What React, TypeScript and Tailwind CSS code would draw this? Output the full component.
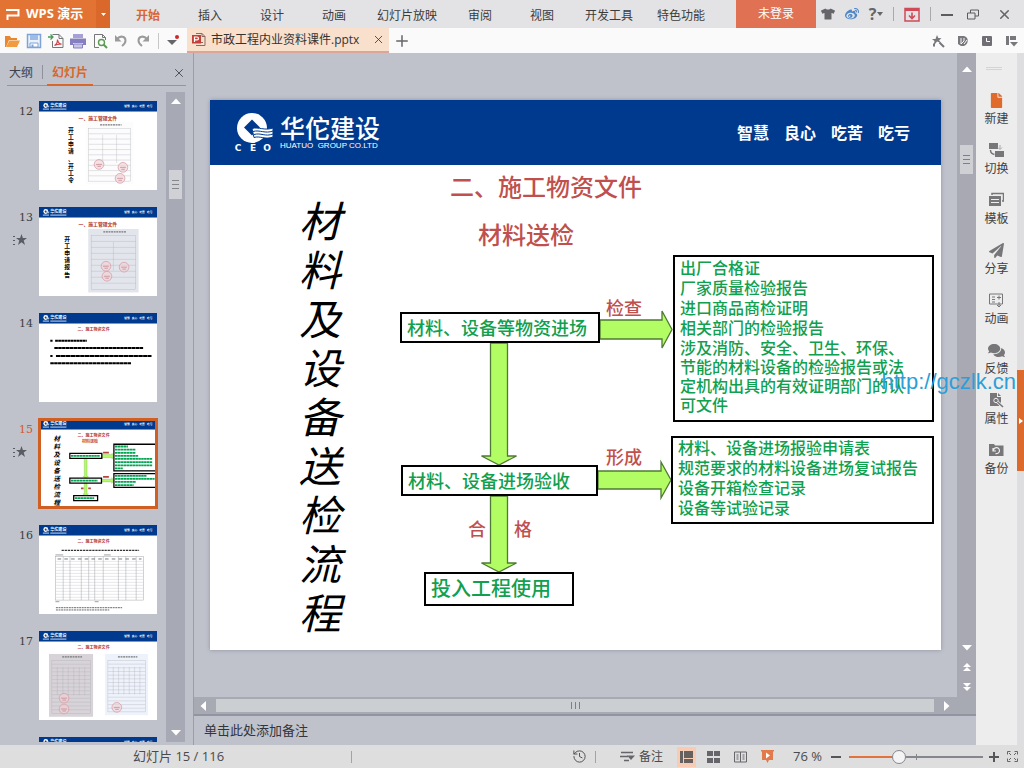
import type { ReactNode } from "react";
import { FaComments, FaFile, FaPaperPlane, FaTshirt, FaWeibo } from "react-icons/fa";
import { History, Plus, X } from "lucide-react";

const MENU = ["开始", "插入", "设计", "动画", "幻灯片放映", "审阅", "视图", "开发工具", "特色功能"];
const MOTTO = ["智慧", "良心", "吃苦", "吃亏"];
const FLOW_TITLE = "材料及设备送检流程";

/* ---------- icons ---------- */

function Svg({ w = 16, h = 16, children }: { w?: number; h?: number; children: ReactNode }) {
  return (
    <svg width={w} height={h} viewBox={`0 0 ${w} ${h}`} fill="none" aria-hidden="true" className="shrink-0">
      {children}
    </svg>
  );
}

const FolderIcon = () => (
  <Svg>
    <path d="M1 14V3h5l1 2h6v2H5L2 14z" fill="#e8872f" />
    <path d="M2 14l3.500-6.500H16L13 14z" fill="#f29a3f" />
  </Svg>
);
const SaveIcon = () => (
  <Svg>
    <path d="M1.500 1.500h13v13h-13z" stroke="#7fa3d6" strokeWidth="1.500" fill="#e9f1fb" />
    <path d="M4 2h8v5H4z" fill="#9dbce6" />
    <path d="M4 10h8v4H4z" stroke="#7fa3d6" fill="#fff" />
    <path d="M5.500 11.500h2V14h-2z" fill="#7fa3d6" />
  </Svg>
);
const PdfIcon = () => (
  <Svg>
    <path d="M4.500 1.500H11L15 5.500v9H4.500V8" stroke="#777" />
    <path d="M11 1.500v4h4" stroke="#777" />
    <path d="M0 4h5M2.500 1.500L5 4 2.500 6.500" stroke="#4a9a5b" strokeWidth="1.300" />
    <path d="M6.500 12.500c2-1 3-3.500 3-6 .5 3 2 4.500 4 4.700-2-.4-4.500 0-7 1.300z" stroke="#d0454c" strokeWidth="1.200" />
  </Svg>
);
const PrintIcon = () => (
  <Svg>
    <path d="M3 1h10v4H3z" fill="#a7a0d6" />
    <path d="M0 5.500h16V12h-3v-2H3v2H0z" fill="#8780c0" />
    <path d="M3.500 11h9v4h-9z" fill="#c7c4e6" stroke="#8780c0" />
  </Svg>
);
const PreviewIcon = () => (
  <Svg>
    <path d="M13.500 7V4.500l-3-3h-8v13H7" stroke="#777" />
    <path d="M10.500 1.500v3h3" stroke="#777" />
    <circle cx="9.500" cy="9.500" r="3" stroke="#5a9a52" strokeWidth="1.400" />
    <path d="M11.500 11.500L15 15" stroke="#5a9a52" strokeWidth="2" />
  </Svg>
);
const UndoIcon = ({ flip = false }: { flip?: boolean }) => (
  <Svg w={14} h={16}>
    <g transform={flip ? "translate(14 0) scale(-1 1)" : undefined}>
      <path d="M3 6c3.500-4 8.500-2.500 8.500 1.500 0 2.500-1.500 4-3.500 5.500" stroke="#9b9b9b" strokeWidth="2" />
      <path d="M1 2v6.500h6.500z" fill="#9b9b9b" />
    </g>
  </Svg>
);
const PptIcon = () => (
  <Svg w={15} h={15}>
    <path d="M5 1.500h6l3 3v9H5" stroke="#8b6a62" />
    <path d="M11 1.500v3h3M7 10.500h5" stroke="#8b6a62" />
    <path d="M1 3h9v8.500H1z" fill="#c2403a" />
    <path d="M3.500 10V5h2.600c1.800 0 1.800 2.800 0 2.800H3.500" stroke="#fff" strokeWidth="1.200" />
  </Svg>
);
const Triangle = ({ d, w = 10, h = 6 }: { d: string; w?: number; h?: number }) => (
  <Svg w={w} h={h}>
    <path d={d} fill="#fff" />
  </Svg>
);
const UP = "M0 6L5 0.500L10 6z";
const DOWN = "M0 0L5 5.500L10 0z";

const ToolStar = () => (
  <Svg w={14} h={14}>
    <path d="M6 1l1.300 3 3.200.2-2.400 2L10 9 6 7.500 2.500 12l1-5L1 5h3.500z" fill="#77777c" />
    <path d="M8.500 8.500L13 13M3 9.500v3" stroke="#77777c" strokeWidth="2" />
  </Svg>
);
const ToolShield = () => (
  <Svg w={12} h={14}>
    <path d="M1 2h6c5 1 5 8 0 10H4L1 10z" fill="#77777c" />
    <path d="M4 4v6l3-3V4M7 10l3-4" stroke="#fafafa" />
  </Svg>
);
const ToolClock = () => (
  <Svg w={12} h={12}>
    <rect x="1" y="1" width="10" height="10" rx="1" fill="#6f6f75" />
    <path d="M5.500 3v3.500H9" stroke="#fff" />
  </Svg>
);
const ToolLayout = () => (
  <Svg w={13} h={12}>
    <path d="M1 1h3v9H1zM5 1h6v4H5z" fill="#77777c" />
    <path d="M5 7h8l-4 4.500z" fill="#77777c" />
  </Svg>
);

const SwitchIcon = () => (
  <Svg>
    <path d="M1 1h9v6H1zM7 9h9v6H7z" fill="#77777a" />
    <path d="M2.500 8c0 3 1 4 4 4.500" stroke="#77777a" strokeWidth="1.500" />
    <path d="M12 3v4M10 5.500l2 2 2-2" stroke="#a9a9ac" />
  </Svg>
);
const TemplateIcon = () => (
  <Svg>
    <path d="M4 3V1.500h11.500V9H14" stroke="#77777a" strokeWidth="1.500" />
    <path d="M1 4h12v10H1z" fill="#77777a" />
    <path d="M3 7.500h8M3 10.500h8" stroke="#eee" />
  </Svg>
);
const AnimIcon = () => (
  <Svg>
    <path d="M1.500 2h13v10h-13z" stroke="#77777a" />
    <path d="M4 5h3M4 7.500h3M4 10h3" stroke="#77777a" />
    <path d="M11 3.500v4M9 5.500h4M11 10v5M9 13l2 2 2-2" stroke="#77777a" />
  </Svg>
);
const PropsIcon = () => (
  <Svg>
    <path d="M2 1h7v4h4v5l-2 4H2z" fill="#77777a" />
    <path d="M10 1l3 3h-3z" fill="#77777a" />
    <circle cx="8" cy="8.500" r="2.200" stroke="#eee" />
    <path d="M9.500 10l5.500 5" stroke="#eee" strokeWidth="3" />
    <path d="M9.500 10l5.500 5" stroke="#77777a" strokeWidth="1.600" />
  </Svg>
);
const BackupIcon = () => (
  <Svg>
    <path d="M1 2h5l1 1.500h8.500V14H1z" fill="#77777a" />
    <path d="M5.500 8.500a3 3 0 1 1 2 3M5 6v3h3" stroke="#eee" strokeWidth="1.200" />
  </Svg>
);

const SIDE: { label: string; icon: ReactNode }[] = [
  { label: "新建", icon: <FaFile size={15} color="#e06a2b" /> },
  { label: "切换", icon: <SwitchIcon /> },
  { label: "模板", icon: <TemplateIcon /> },
  { label: "分享", icon: <FaPaperPlane size={15} color="#77777a" /> },
  { label: "动画", icon: <AnimIcon /> },
  { label: "反馈", icon: <FaComments size={17} color="#77777a" /> },
  { label: "属性", icon: <PropsIcon /> },
  { label: "备份", icon: <BackupIcon /> },
];

/* ---------- slide drawing parts ---------- */

function CoinMark() {
  return (
    <g>
      <circle cx="42" cy="28" r="15" fill="#fff" />
      <path d="M42 19.500l8 8-8 8-8-8z" fill="#003a8e" />
      <path d="M42 28.500c7-2 12 2.500 21-.5v9c-8 3-13-1.500-19 .5z" fill="#fff" stroke="#003a8e" />
      <path d="M43 31.500c7-2 12 2.500 20-.5M44 34.500c7-2 11 2.500 19-.5" stroke="#003a8e" fill="none" />
    </g>
  );
}

function FlowArrows() {
  return (
    <g fill="#b1fd63" stroke="#4f7a35" strokeWidth="1.300">
      <path d="M390 220h62v-9l10 18.500-10 18.500v-9h-62z" />
      <path d="M388 371h63v-9l10 18-10 18v-9h-63z" />
      <path d="M280.500 243v113h-9l17.500 9 17.500-9h-9V243z" />
      <path d="M280.500 396v67h-9l17.500 9 17.500-9h-9v-67z" />
    </g>
  );
}

/* ---------- thumbnails (drawn on the slide's own 731 x 550 grid) ---------- */

function VerticalText({ text, x, y, step, size, italic = false }: { text: string; x: number; y: number; step: number; size: number; italic?: boolean }) {
  return (
    <g fontSize={size} fontWeight={700} fontStyle={italic ? "italic" : "normal"} textAnchor="middle" fill="#000">
      {text.split("").map((c, i) => (
        <text key={i} x={x} y={y + i * step}>{c}</text>
      ))}
    </g>
  );
}

function Sheet({ x, y, w, h, fill, rows, cols, stamps }: { x: number; y: number; w: number; h: number; fill: string; rows: number; cols: number; stamps: number[][] }) {
  return (
    <g>
      <rect x={x} y={y} width={w} height={h} fill={fill} />
      <g stroke="#a9abb2" strokeWidth="2" fill="none">
        <rect x={x + 18} y={y + 40} width={w - 36} height={h - 60} />
        {Array.from({ length: rows }, (_, i) => (
          <path key={i} d={`M${x + 18} ${y + 40 + ((i + 1) * (h - 60)) / (rows + 1)}h${w - 36}`} />
        ))}
        {Array.from({ length: cols }, (_, i) => (
          <path key={i} d={`M${x + 18 + ((i + 1) * (w - 36)) / (cols + 1)} ${y + 80}v${h * 0.45}`} />
        ))}
      </g>
      <path d={`M${x + w * 0.3} ${y + 18}h${w * 0.45}`} stroke="#777" strokeWidth="8" strokeDasharray="12 4" />
      {stamps.map(([cx, cy], i) => (
        <g key={i} stroke="#d9a0a8" strokeWidth="5" fill="#f0d0d6" fillOpacity="0.6">
          <circle cx={cx} cy={cy} r="30" />
          <path d={`M${cx - 18} ${cy}h36M${cx - 10} ${cy + 12}h22`} stroke="#c98b95" />
        </g>
      ))}
    </g>
  );
}

function ThumbBody({ n }: { n: number }) {
  if (n === 12)
    return (
      <g>
        <VerticalText text="开工申请、开工令" x={198} y={192} step={44} size={36} />
        <Sheet x={290} y={130} w={295} h={385} fill="#fcfcfd" rows={9} cols={2} stamps={[[372, 392], [520, 410], [502, 478]]} />
      </g>
    );
  if (n === 13)
    return (
      <g>
        <VerticalText text="开工申请报告" x={175} y={210} step={44} size={36} />
        <Sheet x={305} y={136} w={312} h={392} fill="#e3e5ec" rows={8} cols={1} stamps={[[415, 366], [527, 372], [421, 428]]} />
      </g>
    );
  if (n === 14)
    return (
      <g stroke="#000" strokeWidth="12">
        <path d="M70 172h14M100 172h196" strokeDasharray="17 2" />
        <path d="M95 216h550" strokeDasharray="22 2" />
        <path d="M70 266h14M105 266h592" strokeDasharray="28 2" />
        <path d="M70 310h500" strokeDasharray="22 2" />
      </g>
    );
  if (n === 15)
    return (
      <g>
        <text x="316" y="150" fontSize="25" fontWeight="700" fill="#b5443f" textAnchor="middle">材料送检</text>
        <VerticalText text={FLOW_TITLE} x={110} y={138} step={49} size={40} italic />
        <FlowArrows />
        <g fill="none" stroke="#000" strokeWidth="8">
          <path d="M191 213h198v30H191zM191 366h196v30H191zM215 473h148v32H215zM464 156h260v165H464zM464 338h260v85H464z" />
        </g>
        <g stroke="#00a550" strokeWidth="11" strokeDasharray="16 2">
          <path d="M198 228h180M198 381h165M222 489h120M471 170h80M471 189h128M471 209h128M471 228h145M471 247h230M471 267h230M471 286h230M471 305h48M471 351h195M471 370h245M471 389h130M471 408h115" />
        </g>
        <path d="M397 208h36M397 357h36M260 429h16M305 429h16" stroke="#b5443f" strokeWidth="11" />
      </g>
    );
  if (n === 16)
    return (
      <g>
        <path d="M140 157h480" stroke="#333" strokeWidth="8" strokeDasharray="14 5" />
        <path d="M102 185h48M402 185h42M102 474h24M345 474h24" stroke="#888" strokeWidth="5" />
        <g stroke="#a0a2a8" strokeWidth="3" fill="none">
          <rect x="102" y="194" width="546" height="270" />
          {Array.from({ length: 13 }, (_, i) => (
            <path key={i} d={`M102 ${225 + i * 18.500}h546`} stroke="#cfd0d5" />
          ))}
          {[150, 192, 262, 308, 345, 398, 492, 538, 602].map((x) => (
            <path key={x} d={`M${x} 194v270`} />
          ))}
        </g>
        <path d="M115 210h520" stroke="#777" strokeWidth="6" strokeDasharray="22 20" />
        <path d="M105 511h410M105 525h330" stroke="#444" strokeWidth="5" strokeDasharray="12 4" />
      </g>
    );
  if (n === 17)
    return (
      <g>
        <Sheet x={62} y={142} w={273} h={388} fill="#d7d3d8" rows={13} cols={6} stamps={[[155, 415], [155, 482]]} />
        <Sheet x={409} y={142} w={267} h={378} fill="#eef2fb" rows={13} cols={6} stamps={[[482, 472]]} />
      </g>
    );
  return null;
}

function Thumb({ n }: { n: number }) {
  const early = n < 14;
  return (
    <svg viewBox="0 0 731 550" className="block h-[89px] w-[118px] bg-white" preserveAspectRatio="none" aria-hidden="true">
      <rect width="731" height="65" fill="#003a8e" />
      <CoinMark />
      <text x="70" y="38" fontSize="25" fontWeight="700" fill="#fff">华佗建设</text>
      <path d="M24 50h38M70 50h100" stroke="#fff" strokeWidth="5" />
      {MOTTO.map((m, i) => (
        <text key={m} x={528 + i * 47} y="40" fontSize="17" fontWeight="700" fill="#fff">{m}</text>
      ))}
      {n < 18 && (
        <text x={early ? 365 : 338} y={early ? 118 : 113} fontSize={early ? 30 : 25} fontWeight="700" fill="#b5352f" textAnchor="middle">
          {early ? "一、施工管理文件" : "二、施工物资文件"}
        </text>
      )}
      <ThumbBody n={n} />
    </svg>
  );
}

/* ---------- application regions ---------- */

function TitleBar() {
  return (
    <header className="flex h-7 shrink-0 items-stretch bg-[#e3e3e5] text-xs text-[#3c3c3c]">
      <button className="flex w-[110px] shrink-0 items-center bg-[#e37332] pl-[5px] text-[13px] font-bold text-white">
        <Svg w={16} h={14}>
          <path d="M1 3h12.500v5.500H2.500V13" stroke="#fff" strokeWidth="2" />
        </Svg>
        <span className="ml-[5px] flex-1 whitespace-nowrap text-left">WPS 演示</span>
        <span className="flex h-full w-[14px] items-center justify-center bg-[#d9682a]">
          <Svg w={5} h={3}><path d="M0 0h5L2.500 3z" fill="#fff" /></Svg>
        </span>
      </button>
      <nav className="ml-[7px] flex shrink-0 pt-1">
        {MENU.map((m, i) => (
          <button key={m} className={i === 0 ? "min-w-[62px] px-3 font-bold text-[#d9662b]" : "min-w-[62px] px-3"}>{m}</button>
        ))}
      </nav>
      <div className="flex-1" />
      <button className="w-20 bg-[#e07152] text-white">未登录</button>
      <div className="flex w-52 shrink-0 items-center justify-between pl-[5px] pr-3 text-[#66666a]">
        <button aria-label="皮肤"><FaTshirt size={14} /></button>
        <button aria-label="微博"><FaWeibo size={14} color="#4f86c6" /></button>
        <button aria-label="帮助" className="flex items-center gap-px text-base font-bold leading-none">
          ?<Svg w={6} h={4}><path d="M0 0h6L3 4z" fill="#66666a" /></Svg>
        </button>
        <span className="h-3.5 w-px bg-[#a9a9ac]" />
        <button aria-label="下载">
          <Svg w={16} h={15}>
            <path d="M1 1.500h14v12.500H1z" stroke="#cf4b57" strokeWidth="1.500" />
            <path d="M1 1h14v3H1z" fill="#cf4b57" />
            <path d="M8 5.500v6M5 8.500l3 3 3-3" stroke="#cf4b57" strokeWidth="1.600" />
          </Svg>
        </button>
        <span className="h-3.5 w-px bg-[#a9a9ac]" />
        <button aria-label="最小化"><Svg w={12} h={12}><path d="M0 7h12" stroke="#5c5c60" strokeWidth="2" /></Svg></button>
        <button aria-label="还原" className="ml-1">
          <Svg w={12} h={11}>
            <path d="M0.500 4h7.500v6H0.500zM3.500 4V1h8v6H8" stroke="#5c5c60" />
          </Svg>
        </button>
        <button aria-label="关闭" className="ml-2"><X size={15} strokeWidth={2.5} /></button>
      </div>
    </header>
  );
}

function ToolBar() {
  const quick: [string, ReactNode][] = [
    ["打开", <FolderIcon />],
    ["保存", <SaveIcon />],
    ["输出PDF", <PdfIcon />],
    ["打印", <PrintIcon />],
    ["打印预览", <PreviewIcon />],
    ["撤销", <UndoIcon />],
    ["恢复", <UndoIcon flip />],
  ];
  return (
    <div className="flex h-[25px] shrink-0 items-stretch bg-[#fafafa] text-xs text-[#333]">
      <div className="flex w-[187px] shrink-0 items-center pl-1">
        {quick.map(([label, icon]) => (
          <button key={label} aria-label={label} className="flex w-[22px] shrink-0">{icon}</button>
        ))}
        <span className="h-4 w-px bg-[#c8c8ca]" />
        <button aria-label="更多" className="ml-2">
          <Svg w={12} h={14}>
            <path d="M0 6h10l-5 5z" fill="#66666a" />
            <circle cx="10" cy="3" r="2" fill="#c92a2a" />
          </Svg>
        </button>
      </div>
      <div className="flex w-[202px] shrink-0 items-center border-b-2 border-[#dba59c] bg-[#f8e0cd] pl-1">
        <PptIcon />
        <span className="ml-[5px] flex-1 whitespace-nowrap">市政工程内业资料课件.pptx</span>
        <button aria-label="关闭标签" className="mr-1"><X size={13} strokeWidth={1.5} /></button>
      </div>
      <button aria-label="新建标签" className="ml-1 text-[#66666a]"><Plus size={18} strokeWidth={2} /></button>
      <div className="flex-1" />
      <div className="flex items-center gap-3 pr-1.5">
        <ToolStar /><ToolShield /><ToolClock /><ToolLayout />
      </div>
    </div>
  );
}

function SlidePanel() {
  return (
    <aside className="flex w-[194px] shrink-0 flex-col border-r border-[#9a9da8] bg-[#bfc2cb] pb-[3px]">
      <div className="mx-[7px] flex h-[33px] shrink-0 items-stretch border-b border-[#9396a1] pt-2 text-xs text-[#3f4148]">
        <button className="px-0.5">大纲</button>
        <span className="ml-[7px] mt-1 h-3.5 w-px bg-[#8e919b]" />
        <button className="-mb-px ml-1 border-b-2 border-[#d9662b] px-[5px] font-bold text-[#d9662b]">幻灯片</button>
        <span className="flex-1" />
        <button aria-label="关闭面板"><X size={14} strokeWidth={1.5} /></button>
      </div>
      <div className="flex min-h-0 flex-1">
        <ol className="flex min-w-0 flex-1 flex-col gap-[17px] overflow-hidden pt-[15px]">
          {[12, 13, 14, 15, 16, 17, 18].map((n) => {
            const on = n === 15;
            return (
              <li key={n} className="flex shrink-0">
                <div className="flex w-[39px] shrink-0 flex-col items-end pr-1.5 pt-[3px] font-['DejaVu_Serif','Noto_Sans_CJK_SC',serif] text-[11px] leading-4">
                  <span className={on ? "text-[#cf5a2a]" : "text-[#3c3e44]"}>{n < 18 ? n : ""}</span>
                  {(n === 13 || on) && (
                    <span className="mr-1.5 mt-2">
                      <Svg w={14} h={12}>
                        <path d="M8.500 0l1.400 4H14l-3.300 2.500L12 11 8.500 8.200 5 11l1.300-4.500L3 4h4.100z" fill="#5a5c64" />
                        <path d="M0 2.500h3M0 6.500h3M0 10.500h3" stroke="#5a5c64" strokeDasharray="2 1" />
                      </Svg>
                    </span>
                  )}
                </div>
                <button aria-label={`幻灯片 ${n}`} className={on ? "outline-3 -outline-offset-2 outline-[#cf5f22]" : ""}>
                  <Thumb n={n} />
                </button>
              </li>
            );
          })}
        </ol>
        <div className="mr-2 mt-1.5 flex w-[19px] shrink-0 flex-col items-center bg-[#a7aab4] py-1.5">
          <Triangle d={UP} />
          <div className="mt-[66px] flex h-[29px] w-[13px] flex-col items-center justify-center gap-[3px] bg-[#cfd1d6]">
            <span className="h-px w-[7px] bg-[#85878f]" />
            <span className="h-px w-[7px] bg-[#85878f]" />
            <span className="h-px w-[7px] bg-[#85878f]" />
          </div>
          <div className="flex-1" />
          <Triangle d={DOWN} />
        </div>
      </div>
    </aside>
  );
}

const NODE = "absolute flex items-center border-2 border-black bg-white whitespace-nowrap";

function Slide() {
  return (
    <article className="relative flex h-[550px] w-[731px] shrink-0 flex-col bg-white font-medium shadow-[0_0_4px_#8d909a]">
      <div className="flex h-[65px] shrink-0 items-center justify-between bg-[#003a8e] pr-[31px] text-white">
        <div className="flex items-center">
          <svg width="70" height="65" viewBox="0 0 70 65" aria-hidden="true">
            <CoinMark />
            <g fontSize="9" fontWeight="700" fill="#fff" textAnchor="middle" fontFamily="DejaVu Sans">
              <text x="28" y="51">C</text>
              <text x="43" y="51">E</text>
              <text x="57" y="51">O</text>
            </g>
          </svg>
          <div className="flex flex-col">
            <span className="text-[25px] leading-[26px]">华佗建设</span>
            <span className="whitespace-pre font-['Liberation_Sans',sans-serif] text-[8px] leading-[10px]">HUATUO  GROUP CO.LTD</span>
          </div>
        </div>
        <div className="flex gap-[15px] text-base font-bold">
          {MOTTO.map((m) => <span key={m}>{m}</span>)}
        </div>
      </div>

      <div className="flex w-[672px] flex-col items-center pt-1 text-2xl leading-9 text-[#c0504d]">
        <h1>二、施工物资文件</h1>
        <h2 className="mr-10 mt-3">材料送检</h2>
      </div>

      <div className="absolute left-[88px] top-[96px] flex w-11 flex-col items-center text-[42px] font-normal italic leading-[49px] text-black">
        {FLOW_TITLE.split("").map((c, i) => <span key={i}>{c}</span>)}
      </div>

      <svg className="absolute left-0 top-0" width="731" height="550" viewBox="0 0 731 550" aria-hidden="true">
        <FlowArrows />
      </svg>

      <div className="text-lg leading-5 text-[#10a04e]">
        <div className={`${NODE} left-[190px] top-[212px] h-[31px] w-[200px] pl-[5px]`}>材料、设备等物资进场</div>
        <div className={`${NODE} left-[191px] top-[365px] h-[31px] w-[197px] pl-[5px]`}>材料、设备进场验收</div>
        <div className={`${NODE} left-[214px] top-[472px] h-[34px] w-[150px] pl-[5px] text-xl`}>投入工程使用</div>
      </div>

      <div className="text-lg leading-5 text-[#c0504d]">
        <span className="absolute left-[396px] top-[198px]">检查</span>
        <span className="absolute left-[396px] top-[347px]">形成</span>
        <span className="absolute left-[258px] top-[419px]">合</span>
        <span className="absolute left-[304px] top-[419px]">格</span>
      </div>

      <div className="text-base leading-[19px] text-[#10a04e]">
        <div className="absolute left-[463px] top-[155px] flex h-[167px] w-[261px] flex-col gap-px border-2 border-black bg-white pl-[5px] pr-5 pt-0.5">
          <p>出厂合格证</p>
          <p>厂家质量检验报告</p>
          <p>进口商品商检证明</p>
          <p>相关部门的检验报告</p>
          <p>涉及消防、安全、卫生、环保、节能的材料设备的检验报告或法定机构出具的有效证明部门的认可文件</p>
        </div>
        <div className="absolute left-[461px] top-[336px] flex h-[88px] w-[263px] flex-col gap-px border-2 border-black bg-white pl-[5px] pt-px">
          <p>材料、设备进场报验申请表</p>
          <p>规范要求的材料设备进场复试报告</p>
          <p>设备开箱检查记录</p>
          <p>设备等试验记录</p>
        </div>
      </div>
    </article>
  );
}

function Workspace() {
  return (
    <main className="flex min-w-0 flex-1 flex-col bg-[#bfc2cb]">
      <div className="flex min-h-0 flex-1">
        <div className="flex min-w-0 flex-1 items-center justify-center overflow-hidden">
          <Slide />
        </div>
        <div className="flex w-[19px] shrink-0 flex-col items-center bg-[#a9a9b3] pb-1.5 pt-[13px]">
          <Triangle d={UP} />
          <div className="mt-[73px] flex h-[29px] w-[13px] flex-col items-center justify-center gap-[3px] bg-[#cfd0d4]">
            <span className="h-px w-[7px] bg-[#7d7f88]" />
            <span className="h-px w-[7px] bg-[#7d7f88]" />
            <span className="h-px w-[7px] bg-[#7d7f88]" />
          </div>
          <div className="flex-1" />
          <Triangle d={DOWN} />
          <div className="mt-3 flex flex-col gap-3">
            <Triangle w={8} h={8} d="M0 4L4 0L8 4zM0 8L4 4L8 8z" />
            <Triangle w={8} h={8} d="M0 0L4 4L8 0zM0 4L4 8L8 4z" />
          </div>
        </div>
      </div>
      <div className="flex h-[17px] shrink-0 items-center bg-[#a7a9b3] pl-1.5 pr-[26px]">
        <Triangle w={6} h={10} d="M6 0L0.500 5L6 10z" />
        <div className="mx-[10px] flex h-[13px] flex-1 items-center justify-center gap-[3px] bg-[#cccfd1]">
          <span className="h-[7px] w-px bg-[#7d7f88]" />
          <span className="h-[7px] w-px bg-[#7d7f88]" />
          <span className="h-[7px] w-px bg-[#7d7f88]" />
        </div>
        <Triangle w={6} h={10} d="M0 0L5.500 5L0 10z" />
      </div>
      <div className="flex h-[31px] shrink-0 items-center border-t-2 border-[#9295a1] pl-[10px] text-[13px] text-[#33353b]">
        单击此处添加备注
      </div>
    </main>
  );
}

function SideBar() {
  return (
    <aside className="relative flex w-12 shrink-0 bg-[#dedee0]">
      <div className="flex w-[41px] flex-col items-center bg-[#ededed] pt-3.5 text-xs text-[#3f3f42]">
        <span className="mr-1.5 h-[3px] w-4 border-y border-[#d2d4d9]" />
        <div className="mt-[21px] flex flex-col">
          {SIDE.map((s) => (
            <button key={s.label} className="flex h-[50px] flex-col items-center gap-px">
              <span className="flex h-[18px] items-center">{s.icon}</span>
              <span className="leading-[18px]">{s.label}</span>
            </button>
          ))}
        </div>
      </div>
      <button aria-label="展开" className="mt-[317px] flex h-[101px] w-[7px] items-center justify-center bg-[#db6a2c]">
        <Svg w={4} h={6}><path d="M0 0l4 3-4 3z" fill="#fff" /></Svg>
      </button>
      <a href="http://gczlk.cn" className="absolute right-2 top-[317px] font-['Liberation_Sans',sans-serif] text-[22px] leading-6 text-[#2c9fd8]">
        http://gczlk.cn
      </a>
    </aside>
  );
}

function StatusBar() {
  return (
    <footer className="flex h-[23px] shrink-0 items-center bg-[#dededf] text-[#4a4a4d]">
      <span className="w-[351px] pl-[133px] text-[13px]">幻灯片 15 / 116</span>
      <span className="h-3 w-px bg-[#a3a3a6]" />
      <span className="flex-1" />
      <History size={15} strokeWidth={1.5} />
      <span className="ml-2 h-3 w-px bg-[#a3a3a6]" />
      <button className="ml-6 flex items-center gap-1 text-xs">
        <Svg w={15} h={11}>
          <path d="M1 1.500h12M0 5.500h8M4 9.500h5" stroke="#66666a" strokeWidth="1.300" />
          <path d="M7 4.500h8l-4 4.500z" fill="#66666a" />
        </Svg>
        备注
      </button>
      <div className="ml-3.5 flex items-center gap-2">
        <button aria-label="普通视图" className="flex h-5 w-[19px] items-center justify-center bg-[#f8cbb5]">
          <Svg w={13} h={12}><path d="M0 0h3v12H0zM4 0h9v7H4zM4 8h9v4H4z" fill="#66605f" /></Svg>
        </button>
        <button aria-label="浏览视图" className="flex w-[19px] justify-center">
          <Svg w={13} h={12}><path d="M0 0h6v5H0zM7 0h6v5H7zM0 7h6v5H0zM7 7h6v5H7z" fill="#66666a" /></Svg>
        </button>
        <button aria-label="阅读视图" className="flex w-[19px] justify-center">
          <Svg w={13} h={12}><path d="M.5 1h6v10h-6zM6.500 1h6v10h-6zM2.500 4h2M2.500 6h2M2.500 8h2M8.500 4h2M8.500 6h2M8.500 8h2" stroke="#66666a" /></Svg>
        </button>
        <button aria-label="放映" className="flex w-[19px] justify-center">
          <Svg w={13} h={13}><path d="M0 0h13v1.500h-1V10H8l-1.500 3L5 10H1V1.500H0z" fill="#e27a4c" /><path d="M5 2.500l4 3-4 3z" fill="#fff" /></Svg>
        </button>
      </div>
      <label htmlFor="zoom" className="ml-4 whitespace-nowrap text-[13px]">76 %</label>
      <button aria-label="缩小" className="ml-[9px]"><Svg w={10} h={10}><path d="M0 5h10" stroke="#55555a" strokeWidth="2" /></Svg></button>
      <div className="relative ml-2 flex items-center">
        <input
          id="zoom"
          type="range"
          min={10}
          max={196}
          defaultValue={76}
          className="h-4 w-[134px] appearance-none bg-transparent [&::-webkit-slider-runnable-track]:h-0.5 [&::-webkit-slider-runnable-track]:bg-[linear-gradient(to_right,#e2733c_36%,#85878f_36%)] [&::-webkit-slider-thumb]:mt-[-6px] [&::-webkit-slider-thumb]:h-3.5 [&::-webkit-slider-thumb]:w-3.5 [&::-webkit-slider-thumb]:appearance-none [&::-webkit-slider-thumb]:rounded-full [&::-webkit-slider-thumb]:border [&::-webkit-slider-thumb]:border-[#85878f] [&::-webkit-slider-thumb]:bg-[#f4f4f4]"
        />
        <span className="absolute left-1/2 h-1.5 w-px bg-[#85878f]" />
      </div>
      <button aria-label="放大" className="ml-1.5"><Svg w={10} h={10}><path d="M0 5h10M5 0v10" stroke="#55555a" strokeWidth="2" /></Svg></button>
      <button aria-label="适应窗口" className="ml-2 mr-1.5">
        <Svg w={11} h={11}>
          <path d="M.5 3.500v-3h3M7.500.5h3v3M10.500 7.500v3h-3M3.500 10.500h-3v-3M2 2l2 2M9 2L7 4M9 9L7 7M2 9l2-2" stroke="#66666a" />
        </Svg>
      </button>
    </footer>
  );
}

export default function App() {
  return (
    <div className="flex h-screen flex-col overflow-hidden bg-[#bfc2cb] font-['Open_Sans','Noto_Sans_CJK_SC',sans-serif]" lang="zh-CN">
      <TitleBar />
      <ToolBar />
      <div className="flex min-h-0 flex-1">
        <SlidePanel />
        <Workspace />
        <SideBar />
      </div>
      <StatusBar />
    </div>
  );
}
